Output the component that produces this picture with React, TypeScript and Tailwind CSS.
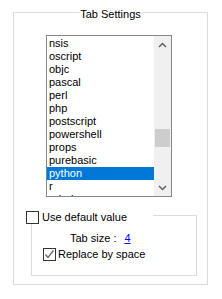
import React from "react";

const LANGS = [
  "nsis", "oscript", "objc", "pascal", "perl", "php", "postscript",
  "powershell", "props", "purebasic", "python", "r", "rebol",
];

function CheckBox({ checked }: { checked?: boolean }) {
  return (
    <span className="w-[13px] h-[13px] shrink-0 border border-[#333333] bg-white flex items-center justify-center">
      {checked && (
        <svg width="11" height="11" viewBox="0 0 11 11">
          <path d="M1.5 5.5 L4 8.5 L9.5 1.5" fill="none" stroke="#666666" strokeWidth="1.3" />
        </svg>
      )}
    </span>
  );
}

function ScrollBar() {
  return (
    <div className="w-[17px] h-full bg-[#f0f0f0] flex flex-col items-center">
      <div className="h-[17px] w-full flex items-center justify-center">
        <svg width="9" height="6" viewBox="0 0 9 6">
          <path d="M1 5 L4.5 1.5 L8 5" fill="none" stroke="#606060" strokeWidth="1.5" />
        </svg>
      </div>
      <div className="h-[76px]" />
      <div className="w-[15px] h-[18px] bg-[#cdcdcd]" />
      <div className="flex-1" />
      <div className="h-[17px] w-full flex items-center justify-center">
        <svg width="9" height="6" viewBox="0 0 9 6">
          <path d="M1 1 L4.5 4.5 L8 1" fill="none" stroke="#606060" strokeWidth="1.5" />
        </svg>
      </div>
    </div>
  );
}

export default function App() {
  return (
    <div
      className="w-[222px] h-[299px] bg-white pt-[12px] pl-[13px] text-[11px] leading-[13px] text-black"
      style={{ fontFamily: '"Liberation Sans", Arial, sans-serif' }}
    >
      {/* outer group box */}
      <div className="relative w-[195px] h-[273px] border border-[#dcdcdc]">
        <span className="absolute top-[-5px] left-1/2 -translate-x-1/2 bg-white px-[1px] whitespace-nowrap">
          Tab Settings
        </span>

        {/* language list */}
        <div className="ml-[32px] mt-[22px] w-[126px] h-[162px] border border-[#828790] flex">
          <div className="w-[107px] h-full overflow-hidden pt-[1px]">
            {LANGS.map((l) => (
              <div
                key={l}
                className={`h-[13px] pl-[2px] whitespace-nowrap ${l === "python" ? "bg-[#0078d7] text-white" : ""}`}
              >
                {l}
              </div>
            ))}
          </div>
          <ScrollBar />
        </div>

        {/* inner group box */}
        <div className="relative ml-[17px] mt-[18px] w-[166px] h-[61px] border border-[#dcdcdc]">
          <div className="absolute top-[-5px] left-[-6px] w-[127px] bg-white flex items-center gap-[3px]">
            <CheckBox />
            <span>Use default value</span>
          </div>
          <div className="pl-[38px] pt-[16px] flex items-center">
            <span className="whitespace-nowrap">Tab size :</span>
            <span className="ml-[8px] text-[#0000ff] underline">4</span>
          </div>
          <div className="pl-[11px] pt-[3px] flex items-center gap-[2px]">
            <CheckBox checked />
            <span>Replace by space</span>
          </div>
        </div>
      </div>
    </div>
  );
}
